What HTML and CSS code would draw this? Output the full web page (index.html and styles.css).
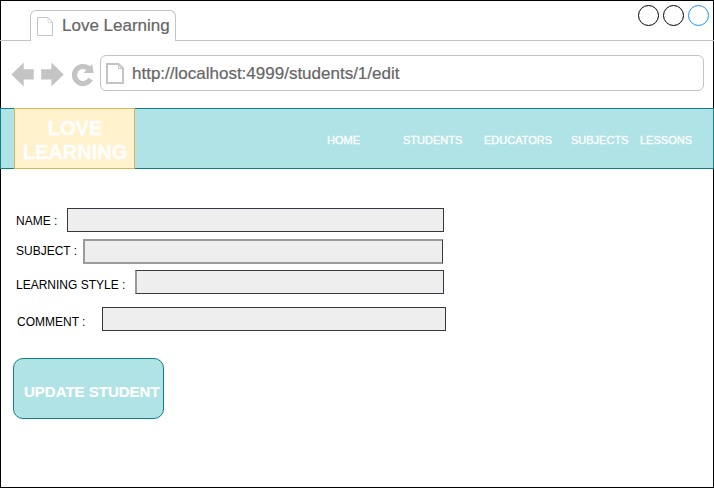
FILE: index.html
```html
<!DOCTYPE html>
<html lang="en">
<head>
<meta charset="utf-8">
<title>Love Learning</title>
<link rel="stylesheet" href="styles.css">
</head>
<body>
<div class="window">
  <div class="tabs">
    <div class="tab-lead"></div>
    <div class="tab">
      <svg class="tab-icon" width="16" height="19" viewBox="0 0 16 19" fill="none" stroke="#c4c4c4"><path d="M.5.5H11L15.5 5.5V18.5H.5Z"/><path stroke-opacity=".6" d="M11 .5V5.5H15.5"/></svg>
      <span>Love Learning</span>
    </div>
    <div class="controls"><i class="dot"></i><i class="dot"></i><i class="dot dot-blue"></i></div>
  </div>
  <div class="toolbar">
    <svg class="nav-icons" width="84" height="28" viewBox="0 0 84 28">
      <path fill="#c4c4c4" d="M.4 14.5 12.7 2.5V9.2H22.7V19.5H12.7V26.5ZM52.7 14.5 40.4 2.5V9.2H30.2V19.5H40.4V26.5Z"/>
      <path fill="none" stroke="#c4c4c4" stroke-width="5.2" d="M79.5 19A8.5 8.5 0 1 1 78 9"/>
      <path fill="#c4c4c4" d="M81.2 4 82.7 13 72.5 13Z"/>
    </svg>
    <div class="address">
      <svg width="18" height="21" viewBox="0 0 18 21" fill="none" stroke="#c4c4c4"><path stroke-width="2" d="M1 1H12.5L17 5.5V20H1Z"/><path d="M12.5 1V5.5H17"/></svg>
      <span>http://localhost:4999/students/1/edit</span>
    </div>
  </div>
  <header class="site-header">
    <div class="logo">LOVE<br>LEARNING</div>
    <nav class="nav">
      <a class="home">HOME</a><a class="students">STUDENTS</a><a class="educators">EDUCATORS</a><a class="subjects">SUBJECTS</a><a>LESSONS</a>
    </nav>
  </header>
  <main class="form">
    <div class="row name"><label>NAME :</label><div class="field"></div></div>
    <div class="row subject"><label>SUBJECT :</label><div class="field"></div></div>
    <div class="row style"><label>LEARNING STYLE :</label><div class="field"></div></div>
    <div class="row comment"><label>COMMENT :</label><div class="field"></div></div>
    <button class="update">UPDATE STUDENT</button>
  </main>
</div>
</body>
</html>
```
FILE: styles.css
```css
* { box-sizing: border-box; }
body { margin: 0; font-family: "Liberation Sans", Arial, sans-serif; background: #fff; }
.window { width: 714px; height: 488px; border: 1px solid #000; display: flex; flex-direction: column; overflow: visible; }
.tabs { height: 40px; display: flex; align-items: flex-end; margin: 0 -1px; }
.tab-lead { width: 30px; border-bottom: 1px solid #c4c4c4; }
.tab { width: 146px; height: 31px; border: 1px solid #c4c4c4; border-bottom: 0; border-radius: 6px 6px 0 0; display: flex; align-items: center; padding-left: 6px; font-size: 17px; line-height: 20px; color: #666; white-space: nowrap; -webkit-text-stroke: 0.2px #666; }
.tab-icon { margin: 1px 9px 0 0; }
.controls { flex: 1; height: 40px; border-bottom: 1px solid #c4c4c4; display: flex; justify-content: flex-end; gap: 4px; padding: 4px 5px 0 0; }
.dot { width: 21px; height: 21px; border: 1px solid #000; border-radius: 50%; }
.dot-blue { border-color: #1890ff; }
.toolbar { height: 67px; display: flex; padding: 14px 9px 0 10px; }
.nav-icons { margin: 5px 5px 0 0; }
.address { width: 604px; height: 36px; border: 1px solid #c4c4c4; border-radius: 6px; display: flex; align-items: center; padding-left: 5px; gap: 8px; font-size: 17px; line-height: 20px; color: #666; -webkit-text-stroke: 0.2px #666; }
.address svg { margin-top: 1px; }
.address span { padding-top: 2px; }
.site-header { height: 61px; margin: 0 -1px; background: #b0e3e6; border: 1px solid #0e8088; display: flex; }
.logo { width: 121px; height: 61px; margin: -1px 0 0 13px; padding: 7px 0 0 1px; background: #fff2cc; border: 1px solid #d6b656; color: #fff; font-size: 20px; font-weight: bold; line-height: 24px; text-align: center; -webkit-text-stroke: 0.3px #fff; }
.nav { display: flex; padding: 25px 0 0 192px; color: #fff; font-size: 11px; line-height: 13px; -webkit-text-stroke: 0.3px #fff; }
.home { width: 76px; }
.students { width: 81px; }
.educators { width: 87px; }
.subjects { width: 69px; }
.form { display: flex; flex-direction: column; align-items: flex-start; padding-top: 39px; color: #000; font-size: 12px; line-height: 14px; }
.row { display: flex; align-items: center; height: 24px; padding-left: 15px; }
.field { height: 24px; background: #eee; border: 1px solid #36393d; }
label { white-space: nowrap; }
.name label { width: 51px; padding-top: 2px; }
.name .field { width: 377px; }
.subject { height: 25px; margin-top: 7px; }
.subject label { width: 67px; padding-bottom: 1px; }
.subject .field { width: 360px; height: 25px; border-width: 2px 1px 2px 2px; border-color: #999b9d #36393d #999b9d #999b9d; }
.style { margin-top: 6px; }
.style label { width: 119px; padding-top: 6px; }
.style .field { width: 309px; border-left: 2px solid #999b9d; }
.comment { margin-top: 13px; padding-left: 16px; }
.comment label { width: 85px; padding-top: 5px; }
.comment .field { width: 344px; }
.update { width: 151px; height: 61px; margin: 27px 0 0 12px; padding: 7px 0 0 10px; background: #b0e3e6; border: 1px solid #0e8088; border-radius: 10px; color: #fff; font: bold 15px/18px "Liberation Sans", Arial, sans-serif; text-align: left; white-space: nowrap; -webkit-text-stroke: 0.2px #fff; }
```
